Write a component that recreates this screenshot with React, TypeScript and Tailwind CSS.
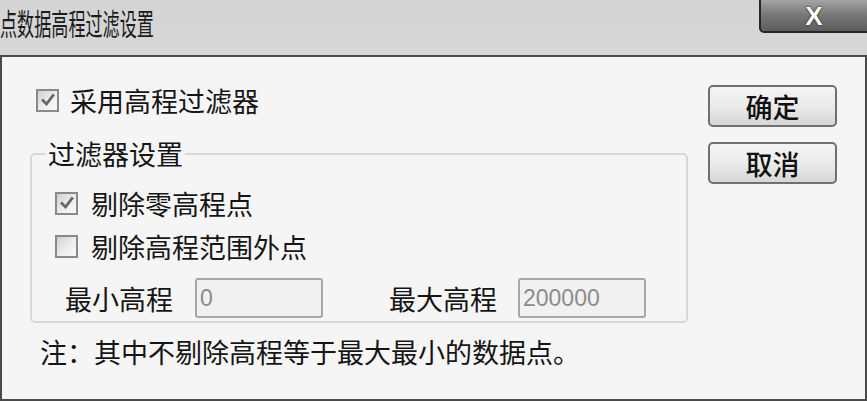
import React from 'react';

const font = { fontFamily: '"Noto Sans CJK SC", "Noto Sans", sans-serif' };

const Check: React.FC<{ checked?: boolean }> = ({ checked }) => (
  <span className="w-[23px] h-[23px] shrink-0 border-2 border-[#8a8a8a] bg-gradient-to-br from-[#cfcfcf] via-[#ececec] to-[#fafafa] flex items-center justify-center">
    {checked && (
      <svg viewBox="0 0 16 16" className="w-[16px] h-[16px]">
        <path d="M3 8.5 L6.5 12 L13 3.5" fill="none" stroke="#666" strokeWidth="2.8" strokeLinecap="square" />
      </svg>
    )}
  </span>
);

const Field: React.FC<{ value: string }> = ({ value }) => (
  <div className="w-[128px] h-[40px] border-2 border-[#a8a8a8] rounded-[3px] bg-[#f1f1f1] flex items-center pl-[3px]">
    <span className="text-[23px] text-[#8c8c8c] leading-none" style={{ fontFamily: '"Liberation Sans", sans-serif' }}>
      {value}
    </span>
  </div>
);

const Button: React.FC<{ label: string }> = ({ label }) => (
  <button className="w-[129px] h-[42px] rounded-[5px] border-2 border-[#707070] bg-gradient-to-b from-[#f4f4f4] via-[#ebebeb] to-[#d6d6d6] text-[27px] text-[#111] font-medium leading-none flex items-center justify-center">
    {label}
  </button>
);

export default function App() {
  return (
    <div className="w-[867px] h-[401px] flex flex-col bg-gradient-to-b from-[#d4d4d4] to-[#e6e6e6] text-[#151515]" style={font}>
      {/* title bar */}
      <div className="h-[55px] flex justify-between items-start">
        <div className="text-[30px] leading-[44px] text-[#1c1c1c] scale-x-[0.57] origin-left whitespace-nowrap">
          点数据高程过滤设置
        </div>
        <div className="w-[110px] h-[33px] mr-[-2px] rounded-bl-[5px] border-2 border-t-0 border-[#262626] bg-gradient-to-b from-[#a4a4a4] via-[#767676] to-[#5e5e5e] flex items-center justify-center">
          <span className="text-[26px] font-bold text-white leading-none" style={{ fontFamily: '"Liberation Sans", sans-serif', textShadow: '0 0 2px #222, 0 0 1px #222' }}>
            X
          </span>
        </div>
      </div>

      {/* body */}
      <div className="flex-1 flex border-2 border-[#4a4a4a] bg-[#f5f5f5]">
        <div className="w-[686px] pl-[28px] pt-[29px]">
          <div className="ml-[6px] flex items-center gap-[11px] h-[28px]">
            <Check checked />
            <span className="text-[27px] leading-none">采用高程过滤器</span>
          </div>

          <fieldset className="mt-[22px] w-[658px] border-2 border-[#d8d8d8] rounded-[5px] pb-[3px]">
            <legend className="ml-[14px] px-[2px] text-[27px] leading-[36px]">过滤器设置</legend>
            <div className="pl-[23px] mt-[17px] flex flex-col gap-[15px]">
              <div className="flex items-center gap-[13px] h-[28px]">
                <Check checked />
                <span className="text-[27px] leading-none">剔除零高程点</span>
              </div>
              <div className="flex items-center gap-[13px] h-[28px]">
                <Check />
                <span className="text-[27px] leading-none">剔除高程范围外点</span>
              </div>
            </div>
            <div className="pl-[33px] mt-[18px] flex items-center">
              <span className="text-[27px] leading-none">最小高程</span>
              <div className="ml-[22px]">
                <Field value="0" />
              </div>
              <span className="ml-[66px] text-[27px] leading-none">最大高程</span>
              <div className="ml-[21px]">
                <Field value="200000" />
              </div>
            </div>
          </fieldset>

          <div className="mt-[11px] ml-[10px] text-[27px] leading-[36px]">注：其中不剔除高程等于最大最小的数据点。</div>
        </div>

        <div className="pl-[20px] pt-[28px] flex flex-col gap-[15px]">
          <Button label="确定" />
          <Button label="取消" />
        </div>
      </div>
    </div>
  );
}
